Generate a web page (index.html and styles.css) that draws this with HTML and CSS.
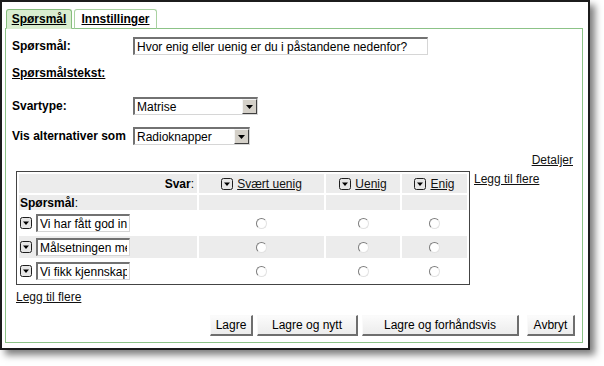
FILE: index.html
```html
<html>
  <head>
    <title>Spørsmål</title>
    <link rel="stylesheet" href="styles.css">
  </head>
  <body>
    <div id="window">
      <div class="tabs">
        <a class="tab active">Spørsmål</a>
        <a class="tab">Innstillinger</a>
      </div>
      <div class="panel">
        <div class="row">
          <label class="lbl">Spørsmål:</label>
          <input class="text question" value="Hvor enig eller uenig er du i påstandene nedenfor?">
        </div>
        <div class="subhead">Spørsmålstekst:</div>
        <div class="row svartype">
          <label class="lbl">Svartype:</label>
          <span class="combo c-type">
            <select><option>Matrise</option></select>
            <span class="arrow"><svg width="7" height="4" viewBox="0 0 7 4"><path d="M0 0h7L3.5 4z" fill="#000"/></svg></span>
          </span>
        </div>
        <div class="row visning">
          <label class="lbl">Vis alternativer som</label>
          <span class="combo c-vis">
            <select><option>Radioknapper</option></select>
            <span class="arrow"><svg width="7" height="4" viewBox="0 0 7 4"><path d="M0 0h7L3.5 4z" fill="#000"/></svg></span>
          </span>
        </div>
        <div class="details"><a class="link">Detaljer</a></div>

        <div class="matrix">
          <table class="grid">
            <tr class="head">
              <td class="c1 svar"><b>Svar</b>:</td>
              <td class="c2 mid"><span class="hd"><span class="dd"><svg width="12" height="12" viewBox="0 0 12 12"><rect x="0.5" y="0.5" width="11" height="11" rx="2" fill="#e6e6e6" stroke="#1e1e1e"/><path d="M3 4.5h6L6 8z" fill="#000"/></svg></span><a class="link">Svært uenig</a></span></td>
              <td class="c3 mid"><span class="hd"><span class="dd"><svg width="12" height="12" viewBox="0 0 12 12"><rect x="0.5" y="0.5" width="11" height="11" rx="2" fill="#e6e6e6" stroke="#1e1e1e"/><path d="M3 4.5h6L6 8z" fill="#000"/></svg></span><a class="link">Uenig</a></span></td>
              <td class="c4 mid"><span class="hd"><span class="dd"><svg width="12" height="12" viewBox="0 0 12 12"><rect x="0.5" y="0.5" width="11" height="11" rx="2" fill="#e6e6e6" stroke="#1e1e1e"/><path d="M3 4.5h6L6 8z" fill="#000"/></svg></span><a class="link">Enig</a></span></td>
            </tr>
            <tr class="head2">
              <td class="sp"><b>Spørsmål</b>:</td>
              <td></td><td></td><td></td>
            </tr>
            <tr class="item">
              <td><span class="q"><span class="dd"><svg width="12" height="12" viewBox="0 0 12 12"><rect x="0.5" y="0.5" width="11" height="11" rx="2" fill="#e6e6e6" stroke="#1e1e1e"/><path d="M3 4.5h6L6 8z" fill="#000"/></svg></span><input class="text stmt" value="Vi har fått god innføring i målene"></span></td>
              <td class="mid"><span class="radio"></span></td>
              <td class="mid"><span class="radio"></span></td>
              <td class="mid"><span class="radio"></span></td>
            </tr>
            <tr class="item alt">
              <td><span class="q"><span class="dd"><svg width="12" height="12" viewBox="0 0 12 12"><rect x="0.5" y="0.5" width="11" height="11" rx="2" fill="#e6e6e6" stroke="#1e1e1e"/><path d="M3 4.5h6L6 8z" fill="#000"/></svg></span><input class="text stmt" value="Målsetningen med kurset var klar"></span></td>
              <td class="mid"><span class="radio"></span></td>
              <td class="mid"><span class="radio"></span></td>
              <td class="mid"><span class="radio"></span></td>
            </tr>
            <tr class="item">
              <td><span class="q"><span class="dd"><svg width="12" height="12" viewBox="0 0 12 12"><rect x="0.5" y="0.5" width="11" height="11" rx="2" fill="#e6e6e6" stroke="#1e1e1e"/><path d="M3 4.5h6L6 8z" fill="#000"/></svg></span><input class="text stmt" value="Vi fikk kjennskap til planen"></span></td>
              <td class="mid"><span class="radio"></span></td>
              <td class="mid"><span class="radio"></span></td>
              <td class="mid"><span class="radio"></span></td>
            </tr>
          </table>
          <a class="link more-side">Legg til flere</a>
        </div>
        <div class="more-below"><a class="link">Legg til flere</a></div>

        <div class="buttons">
          <button class="btn b-lagre">Lagre</button>
          <button class="btn b-nytt">Lagre og nytt</button>
          <button class="btn b-vis">Lagre og forhåndsvis</button>
          <button class="btn b-avbryt">Avbryt</button>
        </div>
      </div>
    </div>
  </body>
</html>
```

FILE: styles.css
```css
body {
  margin: 0;
  background: #fff;
  color: #000;
  font: 12px "Liberation Sans", Arial, sans-serif;
}
#window {
  box-sizing: border-box;
  width: 590px;
  height: 350px;
  padding: 7px 0 0 3px;
  border: 2px solid #1c1c1c;
  background: #fff;
  box-shadow: 5px 5px 7px rgba(0, 0, 0, 0.5);
}

/* tabs */
.tabs {
  display: flex;
  align-items: flex-end;
  gap: 2px;
  height: 20px;
  margin: 0 0 -1px 1px;
  position: relative;
}
.tab {
  box-sizing: border-box;
  height: 20px;
  line-height: 18px;
  text-align: center;
  font-weight: bold;
  text-decoration: underline;
  border: 1px solid #a9d2a1;
  border-radius: 3px 3px 0 0;
  background: #fff;
}
.tab.active {
  width: 66px;
  background: #d9edd0;
  border-color: #86bd7d;
  border-bottom-color: #d9edd0;
}
.tab:not(.active) { width: 83px; border-bottom-color: #8cc387; }

/* panel */
.panel {
  box-sizing: border-box;
  width: 578px;
  height: 315px;
  padding: 8px 7px 0 6px;
  border: 1px solid #8cc387;
}
.row {
  display: flex;
  align-items: center;
  height: 18px;
}
.lbl {
  width: 121px;
  font-weight: bold;
}
.text {
  box-sizing: border-box;
  height: 18px;
  padding: 0 2px;
  border-style: solid;
  border-width: 2px 1px 1px 2px;
  border-color: #727272 #d6d6d6 #d6d6d6 #727272;
  background: #fff;
  font: 12px "Liberation Sans", Arial, sans-serif;
  color: #000;
  outline: none;
}
.question { width: 295px; }
.subhead {
  margin-top: 11px;
  line-height: 14px;
  font-weight: bold;
  text-decoration: underline;
}
.svartype { margin-top: 17px; }
.visning { margin-top: 12px; }

.combo {
  box-sizing: border-box;
  display: inline-flex;
  height: 18px;
  border-style: solid;
  border-width: 2px 1px 1px 2px;
  border-color: #727272 #d6d6d6 #d6d6d6 #727272;
  background: #fff;
}
.c-type { width: 125px; }
.c-vis { width: 117px; }
.combo select {
  flex: 1;
  min-width: 0;
  appearance: none;
  border: 0;
  padding: 0 2px;
  background: #fff;
  font: 12px "Liberation Sans", Arial, sans-serif;
  color: #000;
}
.arrow {
  box-sizing: border-box;
  width: 15px;
  display: flex;
  align-items: center;
  justify-content: center;
  background: #d4d0c8;
  border-style: solid;
  border-width: 1px;
  border-color: #f4f4f4 #404040 #404040 #f4f4f4;
}

.link {
  color: #111;
  text-decoration: underline;
}
.details {
  margin-top: 8px;
  line-height: 14px;
  text-align: right;
  padding-right: 2px;
}

/* matrix table */
.matrix {
  display: flex;
  align-items: flex-start;
  margin: 4px 0 0 4px;
}
.grid {
  font: inherit;
  border: 1px solid #444;
  border-collapse: separate;
  border-spacing: 2px;
}
.grid td { padding: 0; }
.c1 { width: 175px; }
.c2 { width: 125px; }
.c3 { width: 74px; }
.c4 { width: 65px; }
.head td { height: 19px; background: #ececec; }
.head2 td { height: 15px; background: #ececec; }
.item td { height: 22px; }
.item.alt td { background: #ececec; }
.svar { text-align: right; padding-right: 3px !important; }
.sp { padding-left: 1px !important; }
.mid { text-align: center; }
.hd {
  display: inline-flex;
  align-items: center;
  gap: 4px;
}
.dd { display: inline-flex; }
.q {
  display: flex;
  align-items: center;
  gap: 4px;
  padding-left: 1px;
}
.stmt { width: 94px; }
.radio {
  display: inline-block;
  box-sizing: border-box;
  width: 11px;
  height: 11px;
  vertical-align: middle;
  border-radius: 50%;
  border: 1px solid;
  border-color: #7d7d7d #e2e2e2 #e2e2e2 #7d7d7d;
  background: #fff;
}
.more-side {
  margin: 1px 0 0 4px;
  line-height: 14px;
}
.more-below {
  margin: 5px 0 0 4px;
  line-height: 14px;
}

/* buttons */
.buttons {
  display: flex;
  justify-content: flex-end;
  gap: 4px;
  margin-top: 11px;
}
.btn {
  box-sizing: border-box;
  height: 21px;
  padding: 0;
  border-style: solid;
  border-width: 1px 2px 2px 1px;
  border-color: #fafafa #6e6e6e #6e6e6e #fafafa;
  background: linear-gradient(#fbfbfb, #ececec);
  font: 12px "Liberation Sans", Arial, sans-serif;
  color: #000;
}
.b-lagre { width: 43px; }
.b-nytt { width: 101px; }
.b-vis { width: 157px; }
.b-avbryt { width: 48px; margin-left: 4px; }
```
